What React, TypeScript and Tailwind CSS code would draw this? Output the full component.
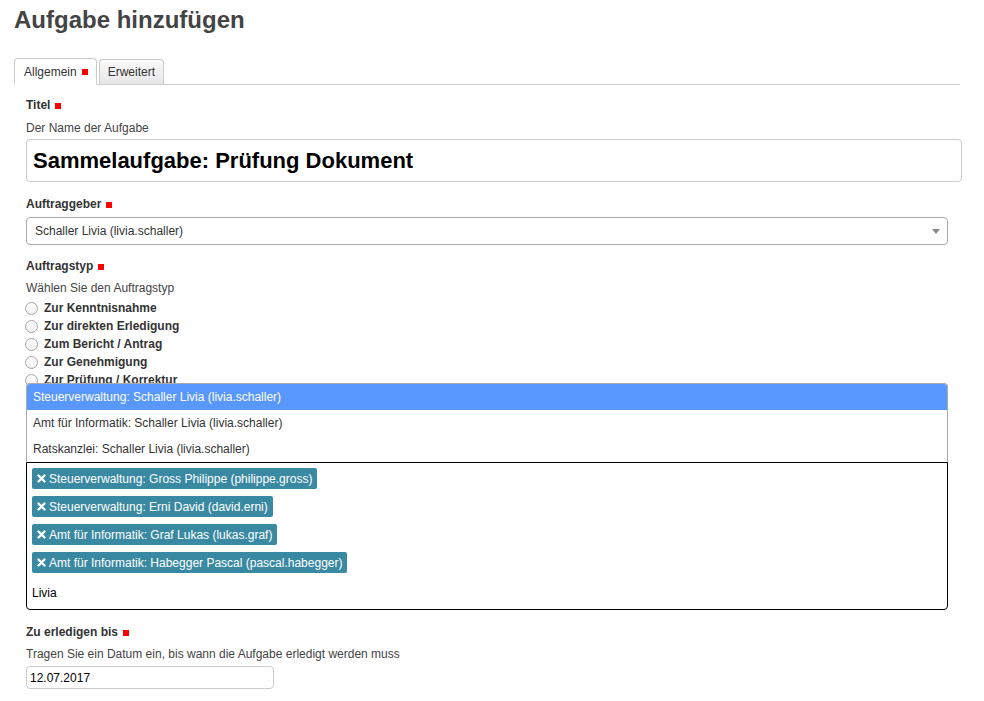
import React from "react";

const Req = () => (
  <span className="inline-block w-[6px] h-[6px] bg-[#f00] ml-[5px] align-[0px]" />
);

function Label({ children }: { children: React.ReactNode }) {
  return (
    <div className="font-bold leading-[17px] text-[#333]">
      {children}
      <Req />
    </div>
  );
}

function Help({ children }: { children: React.ReactNode }) {
  return <div className="leading-[17px] text-[#444]">{children}</div>;
}

const radios = [
  "Zur Kenntnisnahme",
  "Zur direkten Erledigung",
  "Zum Bericht / Antrag",
  "Zur Genehmigung",
  "Zur Prüfung / Korrektur",
];

const options = [
  "Steuerverwaltung: Schaller Livia (livia.schaller)",
  "Amt für Informatik: Schaller Livia (livia.schaller)",
  "Ratskanzlei: Schaller Livia (livia.schaller)",
];

const tags = [
  "Steuerverwaltung: Gross Philippe (philippe.gross)",
  "Steuerverwaltung: Erni David (david.erni)",
  "Amt für Informatik: Graf Lukas (lukas.graf)",
  "Amt für Informatik: Habegger Pascal (pascal.habegger)",
];

function Times() {
  return (
    <svg width="9" height="9" viewBox="0 0 9 9" aria-hidden="true">
      <path d="M1.5 1.5l6 6M7.5 1.5l-6 6" stroke="white" strokeWidth="2.4" strokeLinecap="round" />
    </svg>
  );
}

export default function App() {
  return (
    <div
      className="w-[984px] h-[701px] overflow-hidden bg-white text-[12px] text-[#333] pl-[14px]"
      style={{ fontFamily: '"Liberation Sans", Arial, sans-serif' }}
    >
      {/* Heading */}
      <h1 className="pt-[6px] text-[24px] leading-[28px] font-bold text-[#444]">
        Aufgabe hinzufügen
      </h1>

      {/* Tabs */}
      <div className="mt-[24px] w-[946px] flex items-end border-b border-[#ccc]">
        <div className="h-[27px] -mb-px pl-[9px] pr-[8px] flex items-center bg-white border border-[#ccc] border-b-white rounded-t-[4px] text-[#333]">
          Allgemein
          <Req />
        </div>
        <div className="h-[25px] ml-[2px] px-[8px] flex items-center border border-b-0 border-[#ccc] rounded-t-[4px] bg-gradient-to-b from-[#fafafa] to-[#e6e6e6] text-[#333]">
          Erweitert
        </div>
      </div>

      {/* Form body */}
      <div className="pl-[12px] pt-[12px]">
        <Label>Titel</Label>
        <div className="mt-[6px]">
          <Help>Der Name der Aufgabe</Help>
        </div>
        <div className="mt-[2px] w-[936px] h-[43px] border border-[#ccc] rounded-[4px] flex items-center px-[6px]">
          <span className="text-[22px] font-bold text-black">
            Sammelaufgabe: Prüfung Dokument
          </span>
        </div>

        <div className="mt-[14px]">
          <Label>Auftraggeber</Label>
        </div>
        <div className="mt-[4px] w-[922px] h-[28px] border border-[#aaa] rounded-[4px] flex items-center justify-between pl-[8px] pr-[7px] bg-white">
          <span className="text-[#333]">Schaller Livia (livia.schaller)</span>
          <span className="w-0 h-0 border-l-[4px] border-r-[4px] border-t-[5px] border-l-transparent border-r-transparent border-t-[#888]" />
        </div>

        <div className="mt-[13px]">
          <Label>Auftragstyp</Label>
        </div>
        <div className="mt-[5px]">
          <Help>Wählen Sie den Auftragstyp</Help>
        </div>
        <div className="mt-[2px] flex flex-col">
          {radios.map((r) => (
            <div key={r} className="h-[18px] flex items-center">
              <span className="w-[13px] h-[13px] -ml-px rounded-full border border-[#a6a6a6] bg-gradient-to-b from-white to-[#f0f0f0]" />
              <span className="ml-[6px] font-bold text-[#333]">{r}</span>
            </div>
          ))}
        </div>

        {/* Multi-select with open dropdown (opens upward, over the radio list) */}
        <div className="relative mt-[73px] w-[922px]">
          <div className="absolute bottom-full left-0 w-full bg-white border border-b-0 border-[#aaa] rounded-t-[4px] overflow-hidden">
            {options.map((o, i) => (
              <div
                key={o}
                className={
                  i === 0
                    ? "h-[26px] flex items-center px-[6px] bg-[#5897fb] text-white"
                    : "h-[26px] flex items-center px-[6px] text-[#333]"
                }
              >
                {o}
              </div>
            ))}
          </div>
          <div className="h-[148px] border border-black rounded-b-[4px] px-[5px] pt-[5px]">
            <div className="flex flex-col items-start gap-[7px]">
              {tags.map((t) => (
                <div
                  key={t}
                  className="h-[21px] flex items-center gap-[3px] px-[5px] rounded-[2px] bg-[#3a89a3] text-white"
                >
                  <Times />
                  <span>{t}</span>
                </div>
              ))}
            </div>
            <div className="mt-[12px] leading-[17px] text-black">Livia</div>
          </div>
        </div>

        <div className="mt-[14px]">
          <Label>Zu erledigen bis</Label>
        </div>
        <div className="mt-[5px]">
          <Help>Tragen Sie ein Datum ein, bis wann die Aufgabe erledigt werden muss</Help>
        </div>
        <div className="mt-[3px] w-[248px] h-[23px] border border-[#ccc] rounded-[4px] flex items-center px-[3px] text-black">
          12.07.2017
        </div>
      </div>
    </div>
  );
}
